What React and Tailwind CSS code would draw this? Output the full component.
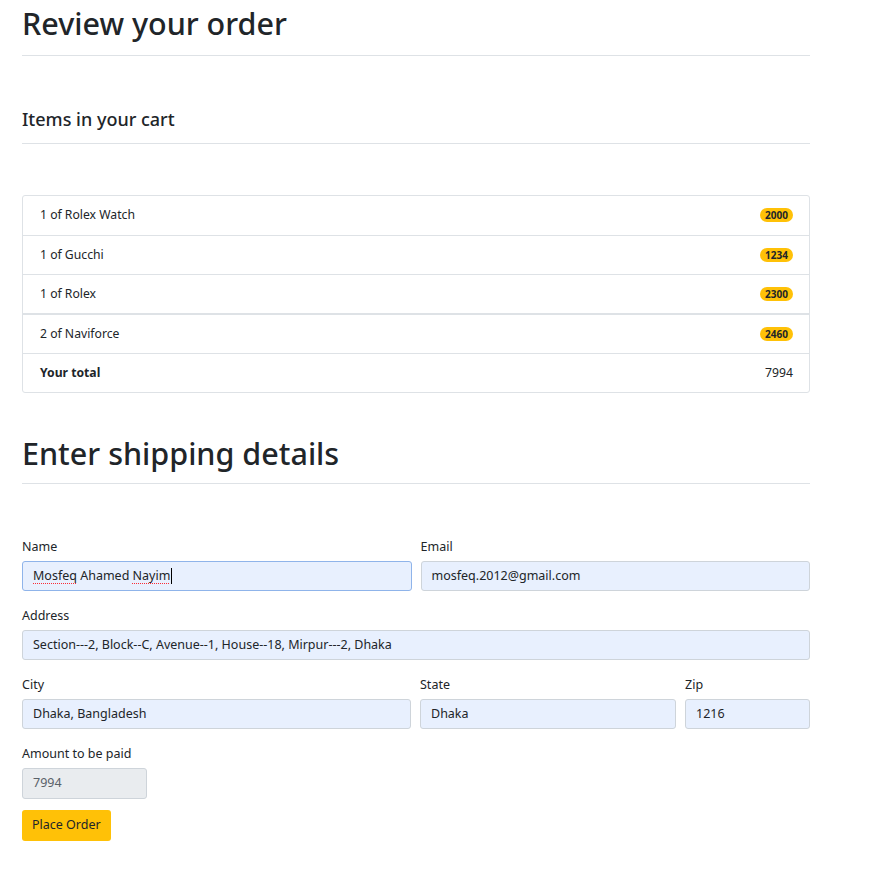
import React from "react";

const items = [
  { name: "1 of Rolex Watch", price: "2000" },
  { name: "1 of Gucchi", price: "1234" },
  { name: "1 of Rolex", price: "2300", thick: true },
  { name: "2 of Naviforce", price: "2460" },
];

function Field({ label, value, focus, className = "" }) {
  return (
    <div className={"flex flex-col " + className}>
      <label className="text-[12.5px] leading-[16px] h-[16px] mb-[6px]">{label}</label>
      <div
        className={
          "h-[30px] rounded-[3px] border bg-[#e8f0fe] flex items-center px-[10px] text-[12.5px] " +
          (focus ? "border-[#8fb4ea]" : "border-[#ced4da]")
        }
      >
        {focus ? (
          <span>
            <span className="underline decoration-dotted decoration-red-500 decoration-[1px] underline-offset-[3px]">Mosfeq</span> Ahamed{" "}
            <span className="underline decoration-dotted decoration-red-500 decoration-[1px] underline-offset-[3px]">Nayim</span>
            <span className="inline-block w-px h-[16px] bg-black align-middle ml-[1px]" />
          </span>
        ) : (
          value
        )}
      </div>
    </div>
  );
}

export default function App() {
  return (
    <div
      className="bg-white text-[#212529] min-h-[870px]"
      style={{ fontFamily: '"Noto Sans", "Open Sans", sans-serif' }}
    >
      <div className="ml-[22px] w-[788px]">
        <h1 className="text-[30.5px] leading-[40px] font-medium pt-[3px] pb-[12px]">Review your order</h1>
        <div className="border-t border-[#dee2e6]" />
        <h2 className="text-[18px] leading-[24px] font-medium mt-[51px] mb-[12px]">Items in your cart</h2>
        <div className="border-t border-[#dee2e6]" />
        <div className="mt-[51px] border border-[#dee2e6] rounded-[3px]">
          {items.map((it, i) => (
            <div
              key={i}
              className={
                "h-[39.5px] flex items-center justify-between pl-[17px] pr-[16px] text-[12.2px] " +
                (it.thick ? "border-b-2 border-[#dee2e6]" : "border-b border-[#dee2e6]")
              }
            >
              <span>{it.name}</span>
              <span className="bg-[#ffc107] rounded-full px-[5px] h-[14px] flex items-center text-[10px] font-bold leading-none">
                {it.price}
              </span>
            </div>
          ))}
          <div className="h-[38px] flex items-center justify-between pl-[17px] pr-[16px] text-[12.2px]">
            <span className="font-bold">Your total</span>
            <span>7994</span>
          </div>
        </div>
        <h1 className="text-[30.5px] leading-[40px] font-medium mt-[40px] pb-[10px]">Enter shipping details</h1>
        <div className="border-t border-[#dee2e6]" />
        <div className="mt-[55px] flex flex-col gap-[17px]">
          <div className="grid grid-cols-2 gap-[9px]">
            <Field label="Name" focus />
            <Field label="Email" value="mosfeq.2012@gmail.com" />
          </div>
          <Field label="Address" value="Section---2, Block--C, Avenue--1, House--18, Mirpur---2, Dhaka" />
          <div className="grid grid-cols-[389px_256px_1fr] gap-[9px]">
            <Field label="City" value="Dhaka, Bangladesh" />
            <Field label="State" value="Dhaka" />
            <Field label="Zip" value="1216" />
          </div>
          <div className="flex flex-col w-[125px]">
            <label className="text-[12.5px] leading-[16px] h-[16px] mb-[6px]">Amount to be paid</label>
            <div className="h-[31px] rounded-[3px] border border-[#ced4da] bg-[#e9ecef] flex items-center px-[10px] text-[12.5px] text-[#5a6169]">
              7994
            </div>
          </div>
          <div className="-mt-[6px]">
            <button className="bg-[#ffc107] rounded-[3px] h-[31px] px-[10px] text-[12.5px] text-[#212529]">Place Order</button>
          </div>
        </div>
      </div>
    </div>
  );
}
